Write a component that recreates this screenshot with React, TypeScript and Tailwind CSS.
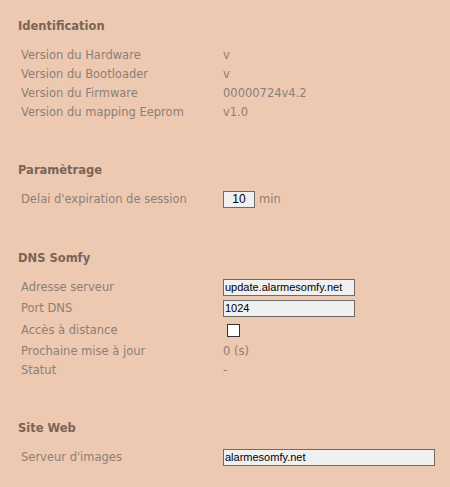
const font = "font-['Verdana','DejaVu_Sans',sans-serif]";

function Row({ label, children, className = "" }: { label: string; children: React.ReactNode; className?: string }) {
  return (
    <div className={`flex items-center h-[19px] ${className}`}>
      <div className="w-[205px] shrink-0 pl-[3px] text-[#8c7f78]">{label}</div>
      <div className="flex items-center text-[#8c7f78]">{children}</div>
    </div>
  );
}

function TextBox({ value, width }: { value: string; width: string }) {
  return (
    <div
      className={`${width} h-[17px] border border-[#6b6b6b] bg-[#f1f0f0] text-black text-[11px] leading-[15px] pl-[1px] font-['Tahoma','Liberation_Sans',sans-serif]`}
    >
      {value}
    </div>
  );
}

function Section({ title, children }: { title: string; children: React.ReactNode }) {
  return (
    <div>
      <h2 className="font-bold text-[#7a6457] h-[17px] leading-[17px]">{title}</h2>
      <div className="mt-[11px]">{children}</div>
    </div>
  );
}

export default function App() {
  return (
    <div className={`w-[450px] h-[487px] bg-[#edc9b1] text-[11.5px] ${font} pl-[18px] pt-[18px]`}>
      <Section title="Identification">
        <Row label="Version du Hardware">v</Row>
        <Row label="Version du Bootloader">v</Row>
        <Row label="Version du Firmware">00000724v4.2</Row>
        <Row label="Version du mapping Eeprom">v1.0</Row>
      </Section>
      <div className="h-[40px]" />
      <Section title="Paramètrage">
        <Row label="Delai d'expiration de session">
          <div className="w-[32px] h-[17px] border border-[#6b6b6b] bg-[#f1f0f0] text-black text-[12px] leading-[15px] text-center font-['Tahoma','Liberation_Sans',sans-serif]">
            10
          </div>
          <span className="ml-[4px]">min</span>
        </Row>
      </Section>
      <div className="h-[41px]" />
      <Section title="DNS Somfy">
        <div className="flex flex-col gap-[2px]">
          <Row label="Adresse serveur">
            <TextBox value="update.alarmesomfy.net" width="w-[132px]" />
          </Row>
          <Row label="Port DNS">
            <TextBox value="1024" width="w-[132px]" />
          </Row>
          <Row label="Accès à distance" className="mt-[1px]">
            <div className="ml-[4px] w-[13px] h-[13px] border border-[#333] bg-white" />
          </Row>
          <Row label="Prochaine mise à jour">0 (s)</Row>
        </div>
        <Row label="Statut">-</Row>
      </Section>
      <div className="h-[40px]" />
      <Section title="Site Web">
        <Row label="Serveur d'images">
          <TextBox value="alarmesomfy.net" width="w-[212px]" />
        </Row>
      </Section>
    </div>
  );
}
